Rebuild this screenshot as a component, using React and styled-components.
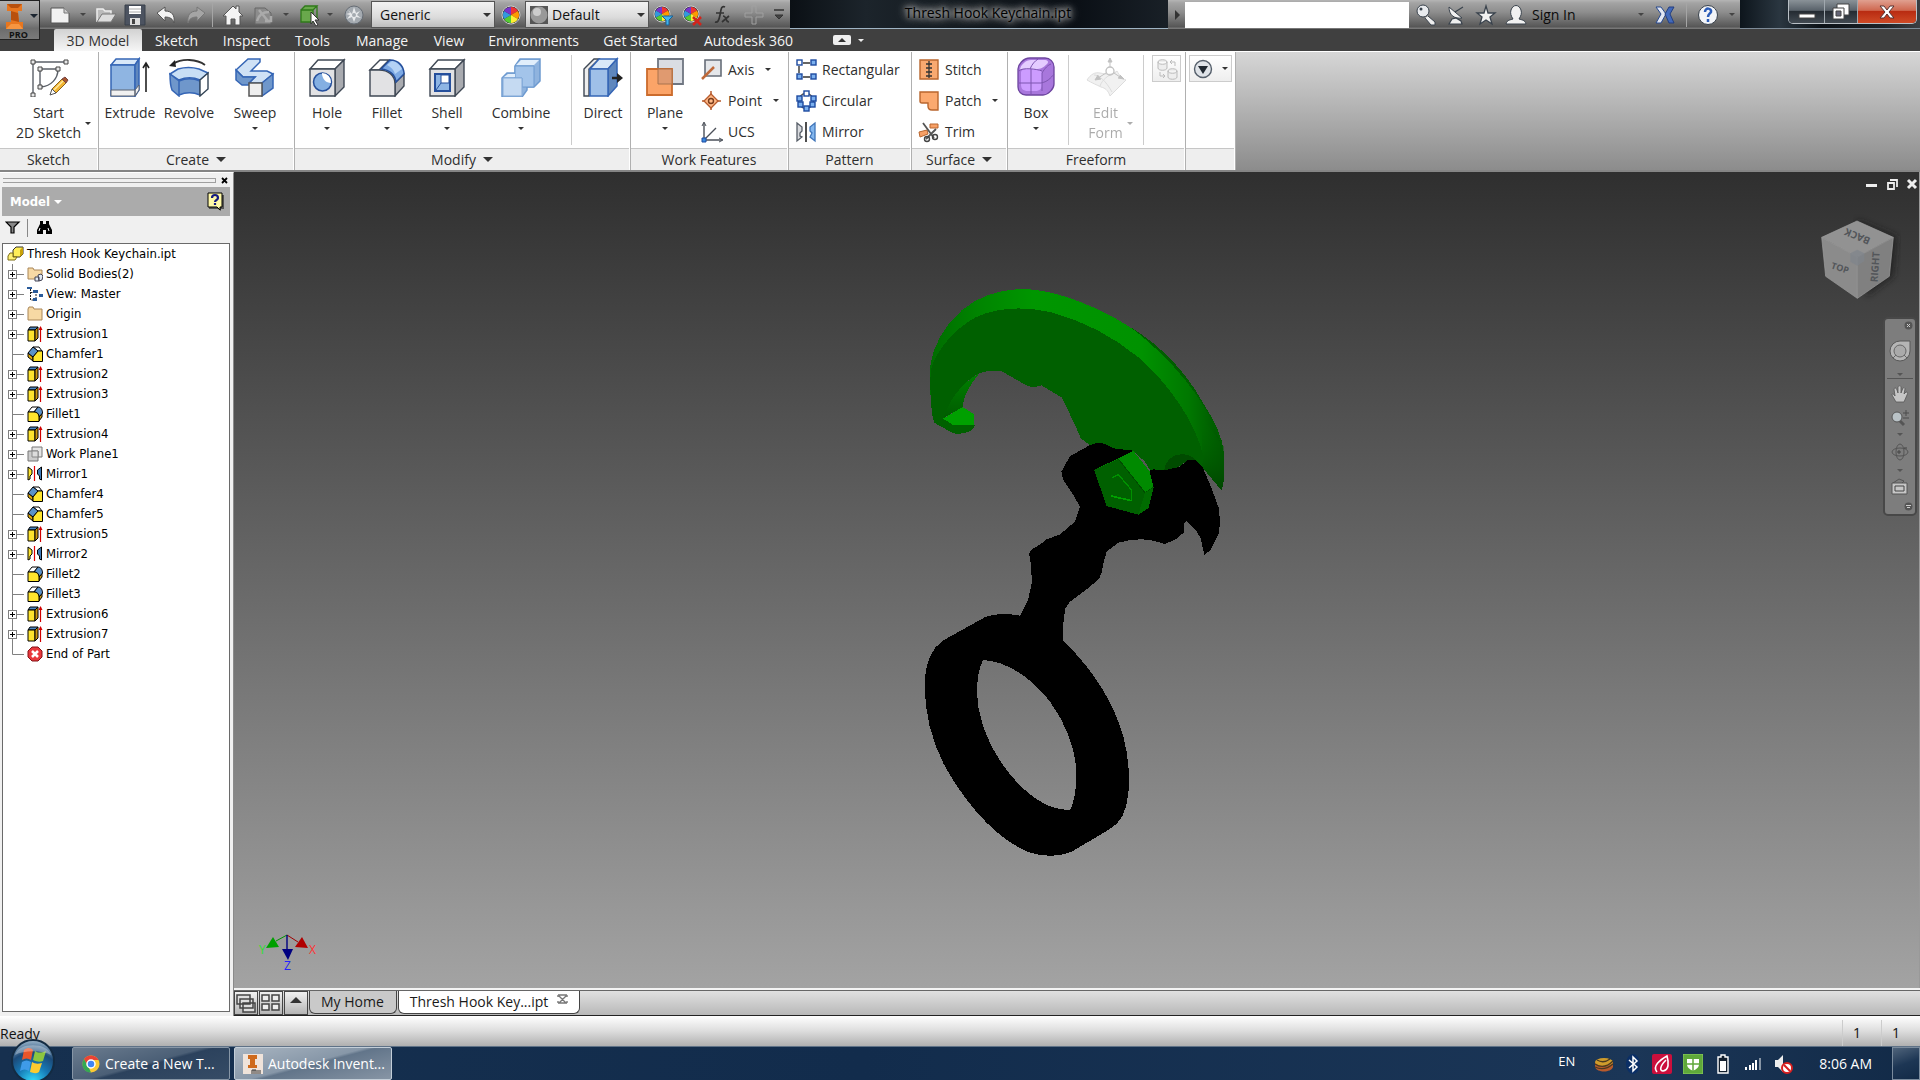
import React from 'react'
import styled, { createGlobalStyle } from 'styled-components'

const GlobalStyle = createGlobalStyle`
  * {
    box-sizing: border-box;
  }
  body {
    margin: 0;
    font-family: 'Open Sans', 'Noto Sans', sans-serif;
    font-size: 14px;
    color: #2e2e2e;
    overflow: hidden;
  }
  button, input, select {
    font: inherit;
    color: inherit;
    border: 0;
    padding: 0;
    margin: 0;
    background: none;
  }
  svg {
    display: block;
    flex: none;
  }
  ul {
    list-style: none;
    margin: 0;
    padding: 0;
  }
`

const Page = styled.div`
  display: flex;
  flex-direction: column;
  height: 100vh;
  min-height: 700px;
  background: #f0f0f0;
`

const Svg = ({ w = 20, h = w, box = `0 0 ${w} ${h}`, children, ...rest }) => (
  <svg width={w} height={h} viewBox={box} fill="none" aria-hidden="true" {...rest}>{children}</svg>
)

const Caret = styled.span`
  flex: none;
  width: 0;
  height: 0;
  border: ${pr => pr.$size || 4}px solid transparent;
  border-top-color: ${pr => pr.$color || '#333'};
  border-bottom-width: 0;
`

/* ---------- title bar ---------- */

const TopArea = styled.header`
  position: relative;
  flex: none;
  background: #404040;
`

const AppButton = styled.button`
  position: absolute;
  z-index: 2;
  left: 0;
  top: 0;
  display: grid;
  grid-template-columns: 30px 8px;
  align-items: center;
  width: 40px;
  height: 40px;
  border: 1px solid #222;
  border-left: 0;
  background: linear-gradient(#b4b4b4, #8c8c8c 50%, #6c6c6c 72%, #7a7a7a);
`

const AppEdition = styled.span`
  grid-column: 1 / 3;
  width: 37px;
  text-align: center;
  font-size: 9px;
  line-height: 10px;
  font-weight: 700;
  color: #111;
`

const TitleBar = styled.div`
  display: flex;
  height: 29px;
  background: #0c1218;
`

const BarStrip = styled.div`
  display: flex;
  flex: none;
  align-items: center;
  width: ${pr => pr.$width}px;
  padding-left: ${pr => pr.$indent || 0}px;
  background: linear-gradient(#b5b5b5 0, #a3a3a3 3px, #8e8e8e 12px, #565656 27px, #777 28px);
`

const Tool = styled.button`
  display: flex;
  flex: none;
  align-items: center;
  justify-content: center;
  width: ${pr => pr.$width}px;
  height: 26px;
`

const BarRule = styled.span`
  flex: none;
  width: 1px;
  height: 24px;
  background: #a5a5a5;
`

const ComboBox = styled.label`
  display: flex;
  flex: none;
  align-items: center;
  width: 124px;
  height: 27px;
  margin-right: ${pr => pr.$after}px;
  padding-left: ${pr => (pr.$icon ? 4 : 8)}px;
  border: 1px solid #555;
  background: linear-gradient(#f2f2f2, #dcdcdc 60%, #bdbdbd);
  color: #111;
  padding-right: 3px;
`

const Select = styled.select`
  flex: 1;
  min-width: 0;
  appearance: none;
  padding-left: ${pr => pr.$indent}px;
  outline: 0;
`

const DocTitle = styled.h1`
  flex: 1;
  margin: 0;
  border-bottom: 1px solid #9fb4c4;
  background: linear-gradient(90deg, #0b1015, #1c242b 20%, #12181d 50%, #0a0f15 75%, #192027);
  font-size: 14px;
  line-height: 25px;
  font-weight: 400;
  text-align: center;
  color: #000;
  text-shadow: 0 0 4px #bbb, 0 0 8px #bbb, 0 0 10px #aaa, 0 0 14px #888;
  padding-left: 18px;
`

const SearchInput = styled.input`
  width: 226px;
  height: 26px;
  margin-right: 3px;
  background: #fff;
`

const SignIn = styled.button`
  display: flex;
  align-items: center;
  justify-content: space-between;
  width: 113px;
  height: 26px;
  margin-right: 6px;
  color: #0a0a0a;
`

const WindowArea = styled.div`
  display: flex;
  justify-content: flex-end;
  width: 180px;
  padding-right: 3px;
  border-bottom: 1px solid #7d8b98;
  background: linear-gradient(90deg, #0d151c, #2a3640 22%, #0b1117 45%, #1b2228 80%, #3c3f43);
`

const WindowButtons = styled.div`
  display: flex;
  height: 24px;
  border: 1px solid #b9c0c6;
  border-top: 0;
  border-radius: 0 0 5px 5px;
  overflow: hidden;
`

const WindowButton = styled.button`
  display: flex;
  align-items: center;
  justify-content: center;
  width: ${pr => pr.$width}px;
  border-right: 1px solid #a0a8ae;
  background: ${pr => pr.$close
    ? 'linear-gradient(#e0a090, #cf6850 45%, #b92c12 50%, #cf4a26)'
    : 'linear-gradient(#8a9298, #59626a 45%, #252c33 50%, #424a52)'};

  &:last-child {
    border-right: 0;
  }
`

/* ---------- ribbon ---------- */

const TabRow = styled.nav`
  display: flex;
  height: 22px;
  padding-left: 54px;
`

const Tab = styled.button`
  width: ${pr => pr.$width}px;
  height: 22px;
  line-height: 20px;
  padding-top: 1px;
  text-align: center;
  white-space: nowrap;
  color: ${pr => (pr.$active ? '#333' : '#f4f4f4')};
  background: ${pr => (pr.$active ? 'linear-gradient(#d2d2d2, #f6f6f6)' : 'none')};
  border-radius: 2px 2px 0 0;
`

const TabToggle = styled.button`
  display: flex;
  align-items: center;
  gap: 7px;
  padding-left: 27px;
`

const RibbonBar = styled.section`
  display: flex;
  flex: none;
  height: 121px;
  border-top: 1px solid #fff;
  border-bottom: 2px solid #858585;
  background: linear-gradient(#d6d6d6, #8c8c8c);
`

const PanelBox = styled.div`
  display: flex;
  flex-direction: column;
  flex: none;
  width: ${pr => pr.$width}px;
  border-right: 1px solid #b0b0b0;
  background: #fff;
`

const PanelBody = styled.div`
  display: flex;
  flex: 1;
`

const PanelTitle = styled.div`
  display: flex;
  align-items: center;
  justify-content: center;
  gap: 7px;
  height: 22px;
  margin-right: 1px;
  border-top: 1px solid #c6c6c6;
  background: #eee;
`

const BigButtonBox = styled.button`
  display: flex;
  flex-direction: column;
  align-items: center;
  flex: none;
  width: ${pr => pr.$width}px;
  padding-top: 5px;
  line-height: 20px;
  opacity: ${pr => (pr.disabled ? 0.4 : 1)};
`

const BigLabel = styled.span`
  display: flex;
  align-items: center;
  justify-content: center;
  margin-top: 6px;
  margin-bottom: 4px;
  white-space: pre;
`

const WithCaret = styled.span`
  display: flex;
  align-items: center;
  gap: 4px;
  padding-left: 9px;
`

const Column = styled.div`
  display: flex;
  flex-direction: column;
  padding: 2px 0 0 ${pr => pr.$indent}px;
`

const SmallButton = styled.button`
  display: flex;
  align-items: center;
  gap: 5px;
  height: 31px;
`

const SmallCaret = styled(Caret)`
  margin-left: 6px;
`

const PanelRule = styled.span`
  width: 1px;
  height: 90px;
  margin: 3px ${pr => pr.$after || 0}px 0 ${pr => pr.$before || 0}px;
  background: #ccc;
`

const BoxedButton = styled.button`
  display: flex;
  align-items: center;
  justify-content: center;
  gap: 9px;
  width: ${pr => pr.$width}px;
  height: 27px;
  margin: 3px 0 0 ${pr => pr.$before}px;
  border: 1px solid #ccc;
  background: linear-gradient(#fff, #eee);
`

const BLUE = '#3565b5'
const DARK = '#3f4854'

const bigIcons = {
  sketch: (
    <>
      <path d="M4 5h33M4 5v33M11 12h18M11 12v18M29 12c0 10-7 17-17 18" stroke="#5b6068" strokeWidth="1.4" />
      <path d="M2 3h4v4H2zM35 3h4v4h-4zM2 36h4v4H2zM9 10h4v4H9zM27 10h4v4h-4zM9 28h4v4H9z" fill="#e8e8e8" stroke="#444" />
      <path d="M23 32l10-10 4 4-10 10z" fill="#f2b531" stroke="#8a6420" />
      <path d="M25 33l9-9" stroke="#ffe9a0" strokeWidth="1.5" />
      <path d="M33 22l3-2 3 3-2 3z" fill="#a8562c" stroke="#744" />
      <path d="M21 38l2-6 4 4z" fill="#fff" stroke="#555" />
    </>
  ),
  extrude: (
    <>
      <path d="M1 8l5-6h23l-4 6z" fill="#d8e8f8" stroke={BLUE} strokeWidth="1.5" />
      <path d="M1 8h24v31H1z" fill="#8fb5e2" stroke={BLUE} strokeWidth="1.5" />
      <path d="M25 8l4-6v31l-4 6z" fill="#5f87bd" stroke={BLUE} strokeWidth="1.5" />
      <path d="M1 33h24v6H1zM25 33l4-5v5l-4 6z" fill="#f1f1f1" stroke="#5a6270" />
      <path d="M36 7v28M33 11l3-5 3 5" stroke="#222" strokeWidth="1.6" />
    </>
  ),
  revolve: (
    <>
      <path d="M4 7c9-6 24-5 32 1" stroke="#333" strokeWidth="1.8" />
      <path d="M0 9l6-6 1 7z" fill="#222" />
      <path d="M1 17l8-5c7-2 14-2 21 0l9 4-8 7c-7-3-14-3-21 0z" fill="#c9dff5" stroke={BLUE} strokeWidth="1.5" />
      <path d="M1 17l9 7v15l-7-6c-2-5-2-11-2-16zM10 24c7-3 14-3 21 0v14c-7-3-14-3-21 0z" fill="#6f97cb" stroke={BLUE} strokeWidth="1.5" />
      <path d="M31 23l8-7v16l-8 7z" fill="#fff" stroke="#345" strokeWidth="1.4" />
    </>
  ),
  sweep: (
    <>
      <path d="M1 13L13 2h12v3l-9 9h16l6 3-11 9H14l6-6H8z" fill="#cfe1f5" stroke={BLUE} strokeWidth="1.5" />
      <path d="M1 13l7 7h12l-6 6v2H7l-6-5zM38 17v14L27 39V26z" fill="#6f97cb" stroke={BLUE} strokeWidth="1.5" />
      <path d="M14 26h13v13H14z" fill="#eee" stroke="#555" strokeWidth="1.5" />
    </>
  ),
  hole: (
    <>
      <path d="M3 12L11 3h26l-9 9z" fill="#fff" stroke={DARK} strokeWidth="1.4" />
      <path d="M28 12l9-9v27l-9 9z" fill="#a9abb0" stroke={DARK} strokeWidth="1.4" />
      <path d="M3 12h25v27H3z" fill="#e2e2e4" stroke={DARK} strokeWidth="1.4" />
      <circle cx="15.5" cy="25" r="9" fill="#84afe2" stroke="#254f9c" strokeWidth="1.5" />
      <path d="M15 16a9 9 0 0 1 9 10c-5 0-9-4-9-10z" fill="#fff" />
    </>
  ),
  fillet: (
    <>
      <path d="M3 13L13 3h9L12 13z" fill="#fff" stroke={DARK} strokeWidth="1.4" />
      <path d="M28 26l9-9v12l-9 10z" fill="#a9abb0" stroke={DARK} strokeWidth="1.4" />
      <path d="M3 13h9c9 0 16 5 16 14v12H3z" fill="#e2e2e4" stroke={DARK} strokeWidth="1.4" />
      <path d="M14 12l9-9c9 0 14 7 14 14l-8 8c-1-7-6-12-15-13z" fill="#7eaae4" stroke="#254f9c" strokeWidth="1.5" />
      <path d="M20 8l5-4c5 1 8 4 10 8l-7 5c-1-4-4-7-8-9z" fill="#b4d2f5" />
    </>
  ),
  shell: (
    <>
      <path d="M3 12L11 3h26l-9 9z" fill="#fff" stroke={DARK} strokeWidth="1.4" />
      <path d="M28 12l9-9v27l-9 9z" fill="#a9abb0" stroke={DARK} strokeWidth="1.4" />
      <path d="M3 12h25v27H3z" fill="#e2e2e4" stroke={DARK} strokeWidth="1.4" />
      <path d="M8 17h15v17H8z" fill="#8eb5e4" stroke="#254f9c" strokeWidth="2" />
      <path d="M14 18h8v8h-8z" fill="#fff" stroke="#254f9c" />
      <path d="M9 33l5-7" stroke="#254f9c" />
    </>
  ),
  combine: (
    <>
      <path d="M14 9l5-7h20v22l-6 6h-7v3l-5 7H1V21l5-5h8z" fill="#8fb3de" stroke="#6d9ad0" strokeWidth="1.5" />
      <path d="M14 9h19v21H21v-9h-7z" fill="#a3c4ea" stroke="#6d9ad0" />
      <path d="M2 21h19v18H2z" fill="#c5daf2" stroke="#85abd9" />
      <path d="M15 8l5-5h18l-5 5zM3 20l4-3h7v3z" fill="#e1eefb" />
    </>
  ),
  direct: (
    <>
      <path d="M1 12L11 2h5L6 12v27H1z" fill="#eee" stroke={DARK} strokeWidth="1.4" />
      <path d="M7 12l9-10h18l-9 10z" fill="#d8e8f8" stroke={BLUE} strokeWidth="1.5" />
      <path d="M25 12l9-10v27l-9 10z" fill="#5f87bd" stroke={BLUE} strokeWidth="1.5" />
      <path d="M7 12h18v27H7z" fill="#9fc0e8" stroke={BLUE} strokeWidth="1.5" />
      <path d="M29 21h6" stroke="#222" strokeWidth="2.5" />
      <path d="M34 16l6 5-6 5z" fill="#222" />
    </>
  ),
  plane: (
    <>
      <path d="M13 2h25v25H13z" fill="#dadde3" stroke="#6f7681" strokeWidth="1.8" />
      <path d="M2 12h25v26H2z" fill="#fba468" stroke="#cb6b2c" strokeWidth="1.8" />
      <path d="M13 12h14v15H13z" fill="#e09a70" stroke="#a9734d" />
    </>
  ),
  box: (
    <>
      <path d="M2 12c0-4 5-11 12-11h15c5 0 9 4 9 9v17c0 5-6 11-11 11H10c-5 0-8-4-8-8z" fill="#a877dc" stroke="#6d459f" strokeWidth="1.3" />
      <path d="M4 13c0-5 6-10 11-10h13c4 0 5 2 3 4-4 4-6 5-11 5H9c-3 0-5 0-5 1z" fill="#e4ccff" />
      <path d="M5 15c1-3 4-3 8-3h6c5 0 7 1 7 5v9c0 6-2 8-7 8h-7c-5 0-7-2-7-7z" fill="#cc9cff" />
      <path d="M14 12c2-5 5-8 8-10M15 12v26M3 26h22c6-1 10-5 13-9M26 16c3-5 6-8 9-9M26 16v18M3 14c3-4 18-2 23 0" stroke="#7d55b0" />
    </>
  ),
  editForm: (
    <>
      <path d="M1 23c4-6 8-8 13-7 6 1 12 3 17-2 2 4 5 8 9 9L24 39c-2-6-5-8-9-9-4-2-9-4-14-7z" fill="#ddd" stroke="#aaa" />
      <path d="M8 18c5 0 12 6 18 17M30 15c-8 3-14 8-16 14" stroke="#aaa" />
      <circle cx="24" cy="14" r="4" stroke="#666" strokeWidth="1.3" />
      <path d="M24 10V3M22 5l2-4 2 4zM20 16l-8 5M12 18l-3 5 6-1M28 16l6 4M34 18l4 4-6-1" stroke="#666" fill="#666" />
    </>
  ),
}

const Square = ({ x, y, full }) => (
  <rect x={x} y={y} width="5" height="5" fill={full ? '#7bb0ee' : '#fff'} stroke="#1d4aa0" strokeWidth="1.4" />
)

const smallIcons = {
  axis: (
    <>
      <path d="M4 1h16v16H4z" fill="#e5e7ea" stroke="#666d78" strokeWidth="1.6" />
      <path d="M1 20L13 8" stroke="#c06a3a" strokeWidth="2.5" />
    </>
  ),
  point: (
    <>
      <path d="M10 1v19M1 11h19" stroke="#b75b2d" strokeWidth="1.5" />
      <path d="M10 4l7 7-7 7-7-7z" fill="#ffb987" stroke="#b75b2d" strokeWidth="1.3" />
      <circle cx="10" cy="11" r="2.5" stroke="#7a3c1c" strokeWidth="1.4" />
    </>
  ),
  ucs: (
    <>
      <path d="M3 2v17h18M3 19L15 7" stroke="#4b5059" strokeWidth="1.4" />
      <path d="M1 5l2-4 2 4M18 17l4 2-4 2" stroke="#4b5059" />
      <path d="M1 17h4v4H1z" fill="#3b8be0" stroke="#1d4aa0" />
    </>
  ),
  rectangular: (
    <>
      <path d="M8 4h7M8 18h7M4 7v7" stroke="#333" strokeWidth="1.4" />
      <Square x="2" y="1" /><Square x="16" y="1" full /><Square x="2" y="15" full /><Square x="16" y="15" full />
    </>
  ),
  circular: (
    <>
      <circle cx="11" cy="11" r="7.500" stroke="#555" strokeWidth="1.3" />
      <Square x="9" y="1" /><Square x="2" y="6" full /><Square x="16" y="6" full />
      <Square x="3" y="12" full /><Square x="15" y="12" full /><Square x="9" y="16" full />
    </>
  ),
  mirror: (
    <>
      <path d="M11 1v20" stroke="#222" strokeWidth="1.6" />
      <path d="M2 2l5 4v4l-2 2v3l2 1-5 4z" fill="#d8dade" stroke="#555c66" strokeWidth="1.3" />
      <path d="M20 2l-5 4v4l2 2-2 4 5 4z" fill="#84b7ee" stroke="#3f74b8" strokeWidth="1.3" />
    </>
  ),
  stitch: (
    <>
      <path d="M2 1h18v19H2z" fill="#f9a970" stroke="#b9662e" strokeWidth="1.4" />
      <path d="M11 2v17M8 5h6M8 9h6M8 13h6M8 17h6" stroke="#333" strokeWidth="1.3" />
    </>
  ),
  patch: <path d="M2 2h18v18h-6c-3 0-4-2-4-4v-3H4c-1 0-2-1-2-2z" fill="#fba96f" stroke="#b9662e" strokeWidth="1.4" />,
  trim: (
    <>
      <path d="M1 11l8-2 1 4-8 3zM12 3h8v4h-8z" fill="#f7a066" stroke="#b9662e" />
      <path d="M5 2l11 15M18 8L8 18" stroke="#555" strokeWidth="1.8" />
      <circle cx="9" cy="18" r="2.5" stroke="#444" strokeWidth="1.4" />
      <circle cx="17" cy="16" r="2.5" stroke="#444" strokeWidth="1.4" />
    </>
  ),
}

const tabs = [
  ['3D Model', 88], ['Sketch', 69], ['Inspect', 71], ['Tools', 61], ['Manage', 78],
  ['View', 56], ['Environments', 113], ['Get Started', 101], ['Autodesk 360', 115],
]

const Panel = ({ title, width, menu, children }) => (
  <PanelBox $width={width}>
    <PanelBody>{children}</PanelBody>
    <PanelTitle>{title}{menu && <Caret $size={5} />}</PanelTitle>
  </PanelBox>
)

const Big = ({ icon, label, width, menu, side, disabled }) => (
  <BigButtonBox $width={width} disabled={disabled}>
    <Svg w={40}>{bigIcons[icon]}</Svg>
    {side
      ? <BigLabel as={WithCaret}><span>{label}</span><Caret $size={3} /></BigLabel>
      : <BigLabel>{label}</BigLabel>}
    {menu && <Caret $size={3} />}
  </BigButtonBox>
)

const Small = ({ icon, label, menu }) => (
  <SmallButton>
    <Svg w={22}>{smallIcons[icon]}</Svg>
    {label}
    {menu && <SmallCaret $size={3} />}
  </SmallButton>
)

function Ribbon() {
  return (
    <RibbonBar>
      <Panel title="Sketch" width={99}>
        <Big icon="sketch" label={'Start\n2D Sketch'} width={98} side />
      </Panel>
      <Panel title="Create" width={196} menu>
        <Big icon="extrude" label="Extrude" width={62} />
        <Big icon="revolve" label="Revolve" width={56} />
        <Big icon="sweep" label="Sweep" width={76} menu />
      </Panel>
      <Panel title="Modify" width={336} menu>
        <Big icon="hole" label="Hole" width={64} menu />
        <Big icon="fillet" label="Fillet" width={56} menu />
        <Big icon="shell" label="Shell" width={64} menu />
        <Big icon="combine" label="Combine" width={84} menu />
        <PanelRule $before={8} $after={5} />
        <Big icon="direct" label="Direct" width={52} />
      </Panel>
      <Panel title="Work Features" width={158}>
        <Big icon="plane" label="Plane" width={68} menu />
        <Column $indent={2}>
          <Small icon="axis" label="Axis" menu />
          <Small icon="point" label="Point" menu />
          <Small icon="ucs" label="UCS" />
        </Column>
      </Panel>
      <Panel title="Pattern" width={123}>
        <Column $indent={6}>
          <Small icon="rectangular" label="Rectangular" />
          <Small icon="circular" label="Circular" />
          <Small icon="mirror" label="Mirror" />
        </Column>
      </Panel>
      <Panel title="Surface" width={96} menu>
        <Column $indent={6}>
          <Small icon="stitch" label="Stitch" />
          <Small icon="patch" label="Patch" menu />
          <Small icon="trim" label="Trim" />
        </Column>
      </Panel>
      <Panel title="Freeform" width={178}>
        <Big icon="box" label="Box" width={56} menu />
        <PanelRule $before={4} />
        <Big icon="editForm" label={'Edit\nForm'} width={74} side disabled />
        <PanelRule />
        <BoxedButton $width={29} $before={8} disabled>
          <Svg w={22}>
            <g stroke="#bbb" fill="#eee">
              <path d="M2 4v6c0 3 9 3 9 0V4M2 4c0-3 9-3 9 0s-9 3-9 0zM12 13v6c0 3 9 3 9 0v-6M12 13c0-3 9-3 9 0s-9 3-9 0z" />
              <path d="M14 4h5v4M16 2l-2 2 2 2M4 14v4h5M7 16l2 2-2 2" fill="none" />
            </g>
          </Svg>
        </BoxedButton>
      </Panel>
      <Panel title="" width={50}>
        <BoxedButton $width={43} $before={3}>
          <Svg w={20}>
            <circle cx="10" cy="10" r="8.5" fill="#dfe3e8" stroke="#555f6b" strokeWidth="1.4" />
            <path d="M5 7h10l-5 8z" fill="#1f2730" />
          </Svg>
          <Caret $size={3} />
        </BoxedButton>
      </Panel>
    </RibbonBar>
  )
}

const wheelColors = ['#e33', '#f90', '#fe3', '#5c3', '#39d', '#73c']

const ColorWheel = ({ r = 9 }) => (
  <g transform="translate(10 10)">
    <circle r={r} fill="#333" stroke="#ccc" />
    {wheelColors.map((c, i) => (
      <path key={c} d={`M0 0L0 ${-r + 1}A${r - 1} ${r - 1} 0 0 1 ${(r - 1) * 0.866} ${(1 - r) / 2}Z`} fill={c} transform={`rotate(${i * 60})`} />
    ))}
  </g>
)

function QuickAccess() {
  return (
    <BarStrip $width={790} $indent={46}>
      <Tool $width={28} aria-label="New"><Svg w={22}><path d="M2 4h13l5 5v10H2z" fill="#f1f1f1" stroke="#555" /><path d="M15 4v5h5" fill="#ccc" stroke="#777" /></Svg></Tool>
      <Tool $width={18} aria-label="New options"><Caret $color="#444" $size={3} /></Tool>
      <Tool $width={27} aria-label="Open"><Svg w={22}><path d="M2 18V5h6l2 2h6v3" fill="#bbb" stroke="#eee" strokeWidth="1.5" /><path d="M2 18l5-8h14l-5 8z" fill="#ddd" stroke="#777" /></Svg></Tool>
      <Tool $width={32} aria-label="Save"><Svg w={22}><path d="M1 1h20v20H1z" fill="#4c5360" stroke="#39404a" /><path d="M5 2h12v8H5z" fill="#fff" /><path d="M5 5h12M5 8h12" stroke="#aaa" /><path d="M6 14h10v7H6z" fill="#ddd" /><path d="M8 15h3v5H8z" fill="#444" /></Svg></Tool>
      <Tool $width={29} aria-label="Undo"><Svg w={22}><path d="M2 9l8-6v4c7 0 10 4 9 12-1-4-4-6-9-6v4z" fill="#f3f3f3" stroke="#555" /></Svg></Tool>
      <Tool $width={32} aria-label="Redo"><Svg w={22}><path d="M20 9l-8-6v4c-7 0-10 4-9 12 1-4 4-6 9-6v4z" fill="#a5a5a5" stroke="#777" /></Svg></Tool>
      <BarRule />
      <Tool $width={40} aria-label="Home"><Svg w={22}><path d="M1 12L11 2l3 3V2h3v6l4 4h-3v9h-5v-6H9v6H4v-9z" fill="#f4f4f4" stroke="#555" /></Svg></Tool>
      <Tool $width={22} aria-label="Switch"><Svg w={22}><path d="M2 4h10l6 5v11H2z" fill="#8c8c8c" stroke="#666" /><path d="M4 17c2-7 7-9 12-9M6 6l9 11M12 17h6v-5" stroke="#aaa" strokeWidth="2.5" /></Svg></Tool>
      <Tool $width={22} aria-label="Switch options"><Caret $color="#444" $size={3} /></Tool>
      <Tool $width={26} aria-label="Select"><Svg w={22}><path d="M2 6h12v12H2zM2 6l4-4h12l-4 4M18 2v12" fill="#69a84c" stroke="#2f7a1a" strokeWidth="1.3" /><path d="M12 8l8 8h-4l3 5-2 1-3-5-2 3z" fill="#fff" stroke="#333" /></Svg></Tool>
      <Tool $width={14} aria-label="Select options"><Caret $color="#444" $size={3} /></Tool>
      <Tool $width={34} aria-label="Render">
        <Svg w={20}>
          <circle cx="10" cy="10" r="9" fill="#a4aab0" stroke="#666d75" />
          <path d="M4 5l4 4 2-7 2 6 4-2-3 4 4 3-5-1-2 5-2-5-5 2 3-4-4-1 4-1z" fill="#e8eaec" />
          <circle cx="10" cy="10" r="2" fill="#a4aab0" />
        </Svg>
      </Tool>
      <ComboBox $after={2}>
        <Select $indent={0} aria-label="Material"><option>Generic</option></Select>
        <Caret />
      </ComboBox>
      <Tool $width={28} aria-label="Appearance"><Svg w={20}><ColorWheel /></Svg></Tool>
      <ComboBox $after={0} $icon>
        <Svg w={18}>
          <rect width="18" height="18" fill="#555" />
          <circle cx="9" cy="9" r="8.5" fill="#999" />
          <circle cx="7" cy="6" r="4" fill="#ccc" />
        </Svg>
        <Select $indent={4} aria-label="Appearance style"><option>Default</option></Select>
        <Caret />
      </ComboBox>
      <Tool $width={28} aria-label="Adjust"><Svg w={22}><ColorWheel r={8} /><path d="M10 12h11l-4 4v5h-3v-5z" fill="#41b4ee" stroke="#1b5f92" /></Svg></Tool>
      <Tool $width={30} aria-label="Clear"><Svg w={22}><ColorWheel r={8} /><path d="M12 13l8 8M20 13l-8 8" stroke="#d3241b" strokeWidth="2.5" /></Svg></Tool>
      <Tool $width={32} aria-label="Parameters"><Svg w={20}><path d="M12 2c-4-2-4 3-5 8s-2 8-5 7M3 8h8M10 11c4 0 2 6 6 6M16 11l-7 6" stroke="#333" strokeWidth="1.7" /></Svg></Tool>
      <Tool $width={30} aria-label="Measure"><Svg w={20}><path d="M8 1h4v7h7v4h-7v7H8v-7H1V8h7z" stroke="#a0a0a0" /></Svg></Tool>
      <Tool $width={20} aria-label="Customize"><Svg w={12}><path d="M1 1h10" stroke="#333" strokeWidth="1.5" /><path d="M2 6h8l-4 4z" fill="#444" stroke="#333" /></Svg></Tool>
    </BarStrip>
  )
}

function Header() {
  return (
    <TopArea>
      <AppButton aria-label="Application menu">
        <Svg w={30} h={29}>
          <path d="M7 3h15v7h-4l1 11h4v7H6v-7h5V10H7z" fill="#e7761f" />
          <path d="M7 3h15l-4 4h-7zM11 10l7 2 1 9-8-2z" fill="#b8500d" />
          <path d="M6 28l5-5h8l4 5z" fill="#f59541" />
        </Svg>
        <Caret $color="#1c2530" />
        <AppEdition>PRO</AppEdition>
      </AppButton>
      <TitleBar>
        <QuickAccess />
        <DocTitle>Thresh Hook Keychain.ipt</DocTitle>
        <BarStrip $width={572} $indent={3}>
          <Tool $width={14} aria-label="Collapse search"><Svg w={8} h={10}><path d="M1 0l5 5-5 5z" fill="#333" /></Svg></Tool>
          <SearchInput aria-label="Search" />
          <Tool $width={28} aria-label="Key"><Svg w={22}><path d="M13 12l7 6v3h-4l-6-7" fill="#eee" stroke="#3a434d" /><circle cx="8" cy="7" r="6" fill="#e9ebee" stroke="#3a434d" /><circle cx="6" cy="5" r="1.5" fill="#3a434d" /></Svg></Tool>
          <Tool $width={32} aria-label="Communication center"><Svg w={22}><path d="M4 3c0 8 5 12 13 11z" fill="#f1f1f1" stroke="#3a434d" /><path d="M10 8l8-5M4 20l3-5 4-1 5 3 1 3z" fill="#eee" stroke="#3a434d" strokeWidth="1.2" /></Svg></Tool>
          <Tool $width={28} aria-label="Favorites"><Svg w={22}><path d="M11 2l2 7h7l-5 4 2 7-6-4-6 4 2-7-5-4h7z" fill="#f1f1f1" stroke="#3a434d" strokeWidth="1.3" /></Svg></Tool>
          <Tool $width={32} aria-label="Account"><Svg w={22}><path d="M1 20c1-4 4-4 7-5-2-3-3-6-2-9 2-6 8-6 10 0 1 3 0 6-2 9 3 1 6 1 7 5z" fill="#f1f1f1" stroke="#3a434d" /></Svg></Tool>
          <SignIn>Sign In <Caret $color="#444" $size={3} /></SignIn>
          <Tool $width={30} aria-label="Exchange"><Svg w={20}><path d="M1 2h5l5 7-5 9H1l5-9z" fill="#e1e6f2" stroke="#26488f" /><path d="M19 2h-5l-4 7 4 9h5l-4-9z" fill="#4269ba" stroke="#243f80" /></Svg></Tool>
          <Tool $width={12} aria-label="More"><BarRule /></Tool>
          <Tool $width={32} aria-label="Help">
            <Svg w={22}>
              <circle cx="11" cy="11" r="9.5" fill="#f2f4f8" stroke="#3a434d" />
              <path d="M8 8c0-5 7-4 6 0-1 2-3 2-3 5M11 15v3" stroke="#2b5cb8" strokeWidth="2.5" />
            </Svg>
          </Tool>
          <Tool $width={16} aria-label="Help options"><Caret $color="#444" $size={3} /></Tool>
        </BarStrip>
        <WindowArea>
          <WindowButtons>
            <WindowButton $width={36} aria-label="Minimize"><Svg w={18}><path d="M1 11h16v4H1z" fill="#fff" stroke="#444" /></Svg></WindowButton>
            <WindowButton $width={33} aria-label="Restore"><Svg w={18}><path d="M5 1h12v11H5z" fill="#fff" stroke="#444" /><path d="M1 5h11v11H1z" fill="#fff" stroke="#444" /><path d="M4 8h5v5H4z" fill="#667" stroke="#444" /></Svg></WindowButton>
            <WindowButton $width={58} $close aria-label="Close"><Svg w={18} h={16}><path d="M2 2h4l3 4 3-4h4l-5 6 5 6h-4l-3-4-3 4H2l5-6z" fill="#fff" stroke="#533" /></Svg></WindowButton>
          </WindowButtons>
        </WindowArea>
      </TitleBar>
      <TabRow>
        {tabs.map(([name, width]) => (
          <Tab key={name} $width={width} $active={name === '3D Model'}>{name}</Tab>
        ))}
        <TabToggle aria-label="Minimize ribbon">
          <Svg w={18} h={10}><rect width="18" height="10" rx="2" fill="#eee" /><path d="M5 7l4-4 4 4z" fill="#333" /></Svg>
          <Caret $size={3} $color="#eee" />
        </TabToggle>
      </TabRow>
    </TopArea>
  )
}

/* ---------- model browser ---------- */

const Workspace = styled.main`
  display: flex;
  flex: 1;
  min-height: 0;
`

const Browser = styled.aside`
  display: flex;
  flex-direction: column;
  flex: none;
  width: 234px;
  padding: 1px 3px 4px 2px;
  border-top: 1px solid #fff;
  border-right: 1px solid #8a8a8a;
  font-family: 'DejaVu Sans Condensed', 'DejaVu Sans', sans-serif;
  font-size: 13px;
  color: #000;
`

const Grip = styled.div`
  display: flex;
  align-items: center;
  gap: 5px;
  height: 13px;
  padding: 0 2px 0 1px;
`

const GripBar = styled.span`
  flex: 1;
  height: 5px;
  border: 1px solid #a0a0a0;
  border-left: 0;
`

const BrowserHead = styled.div`
  display: flex;
  align-items: center;
  gap: 4px;
  height: 29px;
  padding: 0 4px 0 8px;
  background: #ababab;
  color: #fff;
  font-weight: 700;
`

const HelpButton = styled.button`
  margin-left: auto;
`

const BrowserTools = styled.div`
  display: flex;
  align-items: center;
  height: 27px;
  padding: 0 0 3px 3px;
  gap: 6px;
`

const ToolRule = styled.span`
  width: 1px;
  height: 18px;
  background: #888;
`

const TreeBox = styled.div`
  flex: 1;
  min-height: 0;
  border: 1px solid #6a6a6a;
  background: #fff;
`

const TreeRow = styled.li`
  display: flex;
  align-items: center;
  height: 20px;
  gap: 3px;
  padding-left: ${pr => (pr.$root ? 4 : 3)}px;
  line-height: 20px;
  white-space: nowrap;
`

const nodes = [
  ['Solid Bodies(2)', 'bodies', true], ['View: Master', 'view', true], ['Origin', 'folder', true],
  ['Extrusion1', 'extrusion', true], ['Chamfer1', 'chamfer'], ['Extrusion2', 'extrusion', true],
  ['Extrusion3', 'extrusion', true], ['Fillet1', 'fillet'], ['Extrusion4', 'extrusion', true],
  ['Work Plane1', 'workplane', true], ['Mirror1', 'mirror', true], ['Chamfer4', 'chamfer'],
  ['Chamfer5', 'chamfer'], ['Extrusion5', 'extrusion', true], ['Mirror2', 'mirror', true],
  ['Fillet2', 'fillet'], ['Fillet3', 'fillet'], ['Extrusion6', 'extrusion', true],
  ['Extrusion7', 'extrusion', true], ['End of Part', 'end'],
]

const treeIcons = {
  bodies: (
    <>
      <path d="M1 13V2h5l1 2h8v9z" fill="#f7d9a4" stroke="#a98658" />
      <path d="M8 11h4v4H8zM11 9l3-1 2 2-1 4-3 1z" fill="#dfe8f3" stroke="#445" />
    </>
  ),
  view: (
    <>
      <path d="M3.500 3v11h3M3.500 6.500h3M9 8v5M12 9h3" stroke="#222" strokeDasharray="2 1" />
      <path d="M0 1h5v2H0zM6 4h5v3H6zM6 12h4v3H6zM12 8h4v3h-4z" fill="#2a5b9a" />
    </>
  ),
  folder: <path d="M1 14V3l1-2h4l1 2h8v11z" fill="#f7d9a4" stroke="#a98658" />,
  extrusion: (
    <>
      <path d="M1 4l2-3h8L8 4z" fill="#4d86c0" stroke="#000" />
      <path d="M1 4h7v11H1z" fill="#ffe52e" stroke="#000" />
      <path d="M8 4l3-3v11l-3 3z" fill="#c9940a" stroke="#000" />
      <path d="M13.5 16V1" stroke="#d00000" strokeWidth="1.2" />
      <path d="M11.5 4h4l-2-4z" fill="#d00000" />
    </>
  ),
  chamfer: (
    <>
      <path d="M1 7l5 4v4l-5-4z" fill="#e0a90c" stroke="#000" />
      <path d="M6 1h6l3 4h-4z" fill="#fff" stroke="#000" />
      <path d="M1 7l5-6 5 4-5 6z" fill="#5b91c8" stroke="#000" />
      <path d="M6 11l5-6h4.500v10.500H6z" fill="#ffe52e" stroke="#000" />
    </>
  ),
  fillet: (
    <>
      <path d="M1 6l4-5h6L7 6z" fill="#fff" stroke="#000" />
      <path d="M12 11l3-4v4l-3 4z" fill="#c9940a" stroke="#000" />
      <path d="M7 6l4-5c3 0 4.500 3 4.500 6L12 11c0-3-2-5-5-5z" fill="#5b91c8" stroke="#000" />
      <path d="M1 6h6c3 0 5 2 5 5v4.500H1z" fill="#ffe52e" stroke="#000" />
    </>
  ),
  workplane: (
    <>
      <path d="M5 1h10v10H5z" fill="#e5e5e5" stroke="#777" />
      <path d="M1 5h10v10H1z" fill="#ccc" stroke="#777" />
      <path d="M5 5h6v6H5z" fill="#ddd" stroke="#888" />
    </>
  ),
  mirror: (
    <>
      <path d="M7.5 0v15" stroke="#e00000" strokeWidth="1.2" />
      <path d="M1 1l4 3v4l-2 2v3l-2 1z" fill="#ffe52e" stroke="#000" />
      <path d="M14.500 1l-4 3v4l2 2v3l2 1z" fill="#3f7bb8" stroke="#000" />
    </>
  ),
  end: (
    <>
      <path d="M5 1h6l4 4v6l-4 4H5l-4-4V5z" fill="#e8383d" stroke="#841216" />
      <path d="M5 5l6 6M11 5l-6 6" stroke="#fff" strokeWidth="2.5" />
    </>
  ),
}

const Branch = ({ plus, last }) => (
  <Svg w={18} h={20}>
    <path d={last ? 'M6.5 0v10.5' : 'M6.5 0v20'} stroke="#808080" />
    <path d="M6.5 10.5H18" stroke="#808080" />
    {plus && (
      <>
        <rect x="2.5" y="6.5" width="8" height="8" fill="#fff" stroke="#808080" />
        <path d="M4 10.5h5M6.5 8v5" stroke="#000" />
      </>
    )}
  </Svg>
)

function ModelBrowser() {
  return (
    <Browser>
      <Grip>
        <GripBar />
        <button aria-label="Close panel"><Svg w={7}><path d="M1 1l5 5M6 1L1 6" stroke="#000" strokeWidth="1.8" /></Svg></button>
      </Grip>
      <BrowserHead>
        Model <Caret $color="#fff" />
        <HelpButton aria-label="Panel help">
          <Svg w={20}>
            <path d="M3 3h15v14H15v2l-3-2H3z" fill="#555" />
            <path d="M2 1h14v14h-2v3l-3-3H2z" fill="#fff9a8" stroke="#000" />
            <path d="M6 6c0-4 6-4 6 0 0 2-3 2-3 4M9 11v2" stroke="#141a80" strokeWidth="2.2" />
          </Svg>
        </HelpButton>
      </BrowserHead>
      <BrowserTools>
        <button aria-label="Filter"><Svg w={16}><path d="M1 2h13L9 7v6H6V7z" fill="#888" stroke="#000" strokeWidth="1.2" /></Svg></button>
        <ToolRule />
        <button aria-label="Find">
          <Svg w={22} h={16}>
            <path d="M6 1h3v3h3V1h3v3l3 6v4h-6v-4h-3v4H3v-4l3-6z" fill="#000" />
            <path d="M6 8l-1 3M14 8l1 3" stroke="#fff" />
          </Svg>
        </button>
      </BrowserTools>
      <TreeBox>
        <ul>
          <TreeRow $root>
            <Svg w={17} h={16}>
              <path d="M6 4l3-3h7v7l-3 3H6z" fill="#ffee58" stroke="#333" />
              <path d="M13 4l3-3v7l-3 3z" fill="#c9a20a" />
              <path d="M1 10l2-3h3v4h4l-2 3H1z" fill="#fff176" stroke="#7a6a10" />
            </Svg>
            Thresh Hook Keychain.ipt
          </TreeRow>
          {nodes.map(([name, icon, plus], i) => (
            <TreeRow key={name}>
              <Branch plus={plus} last={i === nodes.length - 1} />
              <Svg w={16}>{treeIcons[icon]}</Svg>
              {name}
            </TreeRow>
          ))}
        </ul>
      </TreeBox>
    </Browser>
  )
}

/* ---------- viewport ---------- */

const Stage = styled.div`
  display: flex;
  flex-direction: column;
  flex: 1;
  min-width: 0;
`

const Viewport = styled.div`
  position: relative;
  display: flex;
  flex: 1;
  justify-content: center;
  padding: 98px 0 0 6px;
  min-height: 0;
  overflow: hidden;
  border-right: 1px solid #999;
  background: linear-gradient(#2f2f2f, #686868 50%, #a3a3a3);
`

const DocControls = styled.div`
  position: absolute;
  top: 6px;
  right: 1px;
  display: flex;
  gap: 8px;
`

const CubeSpot = styled.div`
  position: absolute;
  top: 41px;
  right: 15px;
`

const NavBar = styled.div`
  position: absolute;
  top: 145px;
  right: 2px;
  display: flex;
  flex-direction: column;
  align-items: center;
  width: 34px;
  height: 199px;
  border: 2px solid #484848;
  border-radius: 5px;
  background: #7d7d7d;
`

const NavButton = styled.button`
  display: flex;
  align-items: center;
  justify-content: center;
  align-self: ${pr => (pr.$end ? 'flex-end' : 'center')};
  height: ${pr => pr.$height}px;
  padding-right: ${pr => (pr.$end ? 2 : 0)}px;
`

const NavRule = styled.span`
  width: 26px;
  height: 1px;
  background: #555;
`

const TriadSpot = styled.div`
  position: absolute;
  left: 22px;
  bottom: 12px;
`

const HookModel = () => (
  <Svg w={360} h={600} box="0 0 1080 1800" shapeRendering="crispEdges">
    <defs>
      <linearGradient id="rim" x1="90" y1="0" x2="972" y2="0" gradientUnits="userSpaceOnUse">
        <stop offset="0" stopColor="#006c00" />
        <stop offset=".16" stopColor="#008400" />
        <stop offset=".35" stopColor="#009600" />
        <stop offset=".72" stopColor="#009200" />
        <stop offset=".88" stopColor="#007800" />
        <stop offset="1" stopColor="#005200" />
      </linearGradient>
      <linearGradient id="inner" x1="0" y1="310" x2="0" y2="440" gradientUnits="userSpaceOnUse">
        <stop offset="0" stopColor="#008000" />
        <stop offset="1" stopColor="#005c00" />
      </linearGradient>
      <linearGradient id="tip" x1="0" y1="440" x2="0" y2="660" gradientUnits="userSpaceOnUse">
        <stop offset="0" stopColor="#007000" stopOpacity="0" />
        <stop offset="1" stopColor="#004600" />
      </linearGradient>
    </defs>
    <path
      d="M90 290C98 230 130 170 185 121C240 75 305 57 375 57C460 60 560 98 650 147C760 208 850 310 910 400C942 450 968 500 972 550V630L965 662L905 590L700 450L500 300L300 260L200 290L110 400L92 400Z"
      fill="url(#rim)"
    />
    <path d="M690 170C790 232 860 310 910 400C942 450 966 500 970 540L955 500C915 390 825 275 690 170Z" fill="#005e00" />
    <path d="M905 440L972 530V630L965 662L905 590Z" fill="url(#tip)" />
    <path
      d="M92 300C110 240 160 180 225 143C290 112 370 108 450 126C550 152 640 200 715 262C810 345 885 455 911 560L905 595L880 571H862L835 590L795 601H750L735 575L697 542L640 535L605 520L570 525L543 506L525 465L486 383L424 346L404 351L384 349L306 304C280 300 255 303 238 310C195 330 150 385 133 438L129 446L162 466H224L221 474C210 488 185 494 160 490L102 458C92 420 90 370 92 300Z"
      fill="#006000"
    />
    <path d="M238 310C205 350 190 380 188 411L131 444C140 405 180 340 238 310Z" fill="url(#inner)" />
    <path d="M129 446L188 411L221 432V465H160Z" fill="#00a000" />
    <path d="M792 601C795 570 820 550 852 553C875 557 886 566 888 571H862L845 585C830 595 815 600 792 601Z" fill="#004b00" />
    <path
      d="M570 525C590 517 605 518 615 522L640 535L700 542L745 603L760 598L795 601L840 590L862 571L888 570L908 592L933 650L957 716L960 760L956 790L932 840L913 854L902 805L890 785L858 753L852 760V787L827 808L795 822L770 815C740 805 700 805 655 818L620 845L610 880L606 905L598 925L570 950L510 995L496 1015L490 1060V1112C590 1210 645 1310 670 1400C686 1460 690 1520 685 1570C680 1620 665 1660 625 1680L515 1745C475 1762 430 1760 390 1748C290 1710 195 1600 130 1480C90 1400 70 1310 75 1220C80 1175 95 1135 128 1112L258 1040C290 1030 325 1030 361 1037L384 990L396 935L392 880L387 850L395 838L420 824L440 808L480 793L525 755L540 710L520 675L490 630L484 605L495 585L511 558ZM249 1170C310 1172 390 1215 450 1295C515 1385 535 1475 528 1540C526 1575 520 1600 511 1619C440 1625 360 1560 305 1480C250 1400 225 1310 232 1240C234 1210 240 1190 249 1170Z"
      fill="#000"
      fillRule="evenodd"
    />
    <path d="M582 600L700 543L749 604L761 652L745 715L715 734L620 708Z" fill="#008a00" />
    <path d="M582 600L655 567L735 668L715 734L620 708Z" fill="#006000" />
    <path d="M655 567L735 668L761 652" stroke="#004c00" strokeWidth="3" />
    <path d="M735 668L761 652L745 715L715 734Z" fill="#006b00" />
    <path d="M637 622L655 614L695 660V692" stroke="#009000" strokeWidth="4" />
    <path d="M633 678L695 692" stroke="#00a000" strokeWidth="5" />
  </Svg>
)

const ViewCube = () => (
  <Svg w={87} h={90} box="110 130 261 270">
    <defs>
      <filter id="soft"><feGaussianBlur stdDeviation="10" /></filter>
    </defs>
    <path d="M230 150L350 200L340 320L260 380Z" fill="#1f1f1f" filter="url(#soft)" opacity=".7" />
    <path d="M230 154L339 203L231 262L124 203Z" fill="#929292" />
    <path d="M124 203L231 262V386L136 320Z" fill="#8b8b8b" />
    <path d="M339 203L231 262V386L327 320Z" fill="#808080" />
    <path d="M230 154L339 203L327 320L231 386L136 320L124 203ZM124 203L231 262L339 203M231 262V386" stroke="#a0a0a0" strokeWidth="2" />
    <path d="M231 240L252 251V274L231 288L210 276V251Z" fill="#7f858b" opacity=".7" />
    <g fill="#53565a" fontFamily="Open Sans, sans-serif" fontWeight="700" fontSize="30" textAnchor="middle">
      <text transform="translate(235 190) rotate(203)">BACK</text>
      <text transform="translate(176 304) rotate(18)" fontSize="27">TOP</text>
      <text transform="translate(295 293) rotate(-86)" fontSize="30">RIGHT</text>
    </g>
  </Svg>
)

function NavigationBar() {
  return (
    <NavBar>
      <NavButton $height={12} $end aria-label="Close navigation bar"><Svg w={9}><circle cx="4.5" cy="4.5" r="4" fill="#555" /><path d="M3 3l3 3M6 3L3 6" stroke="#ccc" /></Svg></NavButton>
      <NavButton $height={39} aria-label="Full navigation wheel">
        <Svg w={22}>
          <path d="M11 1h10v10A10 10 0 1 1 11 1z" fill="#b5b5b5" stroke="#595959" />
          <circle cx="11" cy="11" r="6" fill="#aaa" stroke="#666" />
          <path d="M4 18l3-3M18 18l-3-3" stroke="#666" />
        </Svg>
      </NavButton>
      <NavButton $height={8} aria-label="Wheel options"><Caret $size={3} $color="#555" /></NavButton>
      <NavRule />
      <NavButton $height={29} aria-label="Pan">
        <Svg w={18}><path d="M5 17l-4-7c0-2 2-1 3 1L3 4c1-2 2-1 3 1l1 3V2c1-2 3-1 3 0v6l2-5c1-1 2 0 2 1l-1 5 2-2c2 0 2 1 1 3l-3 7z" fill="#c6c6c6" stroke="#555" strokeWidth=".8" /></Svg>
      </NavButton>
      <NavButton $height={20} aria-label="Zoom">
        <Svg w={20}><path d="M9 12l5 5" stroke="#555" strokeWidth="3" /><circle cx="7" cy="9" r="5" fill="#b9c2c6" stroke="#555" /><path d="M13 5h6M16 2v6M13 10h6" stroke="#4d4d4d" /></Svg>
      </NavButton>
      <NavButton $height={12} aria-label="Zoom options"><Caret $size={3} $color="#555" /></NavButton>
      <NavButton $height={24} aria-label="Orbit">
        <Svg w={18}><ellipse cx="9" cy="9" rx="8" ry="4" stroke="#555" /><ellipse cx="9" cy="9" rx="4" ry="8" stroke="#555" /><path d="M6 9h4M8 7v4M13 5h3" stroke="#444" /></Svg>
      </NavButton>
      <NavButton $height={12} aria-label="Orbit options"><Caret $size={3} $color="#555" /></NavButton>
      <NavButton $height={22} aria-label="Look at">
        <Svg w={18}><path d="M2 5l6-4 5 2-2 2" stroke="#555" /><path d="M1 5h15v11H1z" fill="#c6c6c6" stroke="#555" /><path d="M4 8h9v5H4z" stroke="#444" /></Svg>
      </NavButton>
      <NavButton $height={16} $end aria-label="Customize navigation bar"><Svg w={9}><circle cx="4.5" cy="4.5" r="4" fill="#555" /><path d="M2 3.5h5M3 5.5h3" stroke="#ccc" /></Svg></NavButton>
    </NavBar>
  )
}

const Triad = () => (
  <Svg w={64} h={46} fontFamily="Open Sans, sans-serif" fontSize="12">
    <path d="M31 5L20 11" stroke="#009000" />
    <path d="M31 5l11 7" stroke="#a00000" />
    <path d="M31 5v16" stroke="#000080" strokeWidth="1.4" />
    <path d="M17 7l6 10-13 1z" fill="#00a000" />
    <path d="M46 7l-7 10 13 1z" fill="#b00000" />
    <path d="M26 19h11l-5 11z" fill="#000080" />
    <text x="3" y="24" fill="#2fe02f">Y</text>
    <text x="53" y="24" fill="#f33">X</text>
    <text x="28" y="40" fill="#22f">Z</text>
  </Svg>
)

const DocTabs = styled.div`
  display: flex;
  align-items: flex-start;
  gap: 1px;
  flex: none;
  height: 28px;
  padding-top: 1px;
  border-top: 2px solid #f4f4f4;
  border-bottom: 1px solid #222;
  background: linear-gradient(#e2e2e2, #b8b8b8);
  box-shadow: inset 0 1px #666;
`

const ArrangeButton = styled.button`
  display: flex;
  align-items: center;
  justify-content: center;
  width: 24px;
  height: 24px;
  border: 1px solid #444;
  background: linear-gradient(#f0f0f0, #b5b5b5);
`

const DocTab = styled.button`
  display: flex;
  align-items: center;
  gap: 9px;
  height: 23px;
  padding: 0 ${pr => (pr.$active ? 11 : 12)}px 2px 11px;
  border: 1px solid #444;
  border-top: 0;
  border-radius: 0 0 6px 6px;
  background: ${pr => (pr.$active ? '#fff' : '#c9c9c9')};
  color: #1a1a1a;
  white-space: nowrap;
`

/* ---------- status bar and taskbar ---------- */

const StatusBar = styled.footer`
  display: flex;
  align-items: center;
  justify-content: space-between;
  flex: none;
  height: 30px;
  padding-top: 4px;
  background: linear-gradient(#fff, #ddd 50%, #b0b0b0);
  color: #111;
`

const StatusCells = styled.div`
  display: flex;
`

const StatusCell = styled.span`
  width: 39px;
  padding-left: 10px;
  line-height: 26px;
  border-left: 1px solid #ccc;
`

const Taskbar = styled.div`
  position: relative;
  display: flex;
  align-items: center;
  flex: none;
  gap: 4px;
  height: 34px;
  padding-left: 72px;
  border-top: 1px solid #5f7287;
  background: linear-gradient(90deg, #16304f, #122c4c 45%, #1b3657 85%, #122a47);
  color: #fff;
`

const StartOrb = styled.button`
  position: absolute;
  left: 10px;
  top: -9px;
`

const TaskButton = styled.button`
  display: flex;
  align-items: center;
  gap: 5px;
  width: 158px;
  height: 33px;
  padding-left: ${pr => (pr.$active ? 8 : 9)}px;
  border: 1px solid ${pr => (pr.$active ? '#c3ced8' : '#8796a6')};
  border-radius: 2px;
  white-space: nowrap;
  background: ${pr => (pr.$active
    ? 'linear-gradient(165deg, #a9b5c1, #8797a8 48%, #62758a 52%, #8795a5)'
    : 'linear-gradient(165deg, #6b7c8f, #4b5f76 48%, #2c425d 52%, #364c66)')};
`

const Tray = styled.div`
  display: flex;
  align-items: center;
  gap: 11px;
  margin-left: auto;
`

const Language = styled.span`
  font-size: 13px;
  padding-bottom: 6px;
  margin-right: 8px;
`

const Clock = styled.time`
  margin: 0 16px 0 14px;
`

const ShowDesktop = styled.button`
  width: 28px;
  height: 33px;
  border: 1px solid #7a8b9d;
  background: linear-gradient(160deg, #50647b, #1d3654 50%, #122a47);
`

function SystemTaskbar() {
  return (
    <Taskbar>
      <StartOrb aria-label="Start">
        <Svg w={46}>
          <defs>
            <radialGradient id="orb" cx=".5" cy="1" r="1">
              <stop offset="0" stopColor="#35e0ff" />
              <stop offset=".4" stopColor="#1679b5" />
              <stop offset=".7" stopColor="#1c4a78" />
              <stop offset="1" stopColor="#9fb8cc" />
            </radialGradient>
          </defs>
          <circle cx="23" cy="23" r="21" fill="url(#orb)" stroke="#132b42" strokeWidth="2" />
          <path d="M14 12c4-3 7-2 9 0l-2 10c-3-2-6-2-9 0z" fill="#e8552a" />
          <path d="M25 13c3 2 6 2 11 0l-3 10c-3 1-6 1-10-1z" fill="#8cc63f" />
          <path d="M12 24c3-2 6-2 9 0l-2 9c-3-2-6-2-9 0z" fill="#3f9be8" />
          <path d="M22 24c3 2 6 2 10 1l-3 9c-3 2-6 1-9 0z" fill="#fccb2f" />
          <path d="M5 17C8 4 38 4 41 17c-9-5-27-5-36 0z" fill="#fff" opacity=".3" />
        </Svg>
      </StartOrb>
      <TaskButton>
        <Svg w={18}>
          <circle cx="9" cy="9" r="8.5" fill="#fcc934" />
          <path d="M2 4a8.5 8.5 0 0 1 14.5 1H9L5 10z" fill="#ea4335" />
          <path d="M2 4l5 9 2 4.5A8.5 8.5 0 0 1 2 4z" fill="#34a853" />
          <circle cx="9" cy="9" r="4" fill="#4285f4" stroke="#fff" strokeWidth="1.5" />
        </Svg>
        Create a New T...
      </TaskButton>
      <TaskButton $active>
        <Svg w={20}>
          <rect width="20" height="20" fill="#efe3da" />
          <path d="M5 1h9v4h-2v6h2v3H5v-3h2V5H5z" fill="#cf6a1c" />
          <path d="M9 20v-4h4v4M11 16v4M15 16v4M17 16v4" stroke="#333" />
        </Svg>
        Autodesk Invent...
      </TaskButton>
      <Tray>
        <Language>EN</Language>
        <Svg w={20} h={16}><path d="M1 6v5c2 6 16 6 18 0V6z" fill="#b85a2c" /><ellipse cx="10" cy="6" rx="9" ry="4" fill="#cf9c2c" /><path d="M1 8c6 4 12 3 18-3M1 11c6 3 12 2 18-3M3 4c5 3 9 2 13-1" stroke="#4a3a20" strokeWidth="1.3" /></Svg>
        <Svg w={16} h={20}><ellipse cx="8" cy="10" rx="7" ry="10" fill="#0b2f66" /><path d="M4 6l8 7-4 4V3l4 4-8 7" stroke="#fff" strokeWidth="1.5" /></Svg>
        <Svg w={20}><rect width="20" height="20" rx="2" fill="#cb0f3c" /><path d="M5 18C0 12 8 6 15 2c2 7 2 14-4 15-3 0-4-4 3-11" stroke="#fff" strokeWidth="1.6" /></Svg>
        <Svg w={20}><rect width="20" height="20" fill="#5fa83a" stroke="#8fd060" /><path d="M4 5h12v5c0 4-3 5-6 7-3-2-6-3-6-7z" fill="#fff" /><path d="M10 4v13M4 10h12" stroke="#5fa83a" strokeWidth="1.5" /></Svg>
        <Svg w={18} h={20}><path d="M4 3h3V1h4v2h3v16H4z" fill="#14202e" stroke="#fff" strokeWidth="1.4" /><path d="M6 7h6v10H6z" fill="#fff" /></Svg>
        <Svg w={20}><path d="M3 16v-3M7 16v-5M10 16V9M13 16V6" stroke="#fff" strokeWidth="2" /><path d="M17 16V4" stroke="#8795a5" strokeWidth="2" /></Svg>
        <Svg w={20}><path d="M1 6h3l5-5v17l-5-5H1z" fill="#eee" /><circle cx="13" cy="14" r="5" fill="#fff" stroke="#d81e1e" strokeWidth="2" /><path d="M10 11l6 6" stroke="#d81e1e" strokeWidth="2" /></Svg>
        <Clock>8:06 AM</Clock>
      </Tray>
      <ShowDesktop aria-label="Show desktop" />
    </Taskbar>
  )
}

export default function App() {
  return (
    <Page>
      <GlobalStyle />
      <Header />
      <Ribbon />
      <Workspace>
        <ModelBrowser />
        <Stage>
          <Viewport>
            <HookModel />
            <DocControls>
              <button aria-label="Minimize document"><Svg w={13}><path d="M1 6h11v3H1z" fill="#eee" /></Svg></button>
              <button aria-label="Restore document"><Svg w={12} h={13}><path d="M4 2h7v7M2 5h6v6H2z" stroke="#eee" strokeWidth="1.8" /></Svg></button>
              <button aria-label="Close document"><Svg w={12} h={13}><path d="M2 2l8 8M10 2l-8 8" stroke="#eee" strokeWidth="3" /></Svg></button>
            </DocControls>
            <CubeSpot><ViewCube /></CubeSpot>
            <NavigationBar />
            <TriadSpot><Triad /></TriadSpot>
          </Viewport>
          <DocTabs>
            <ArrangeButton aria-label="Cascade"><Svg w={20}><path d="M1 2h13v9H1zM4 6h13v9H4zM7 10h12v9H7z" fill="#ddd" stroke="#444" strokeWidth="1.5" /></Svg></ArrangeButton>
            <ArrangeButton aria-label="Tile"><Svg w={20}><path d="M1 2h7v6H1zM11 2h7v6h-7zM1 11h7v6H1zM11 11h7v6h-7z" fill="#eee" stroke="#444" strokeWidth="1.5" /></Svg></ArrangeButton>
            <ArrangeButton aria-label="Show tabs"><Svg w={12} h={14}><path d="M0 7l6-6 6 6z" fill="#333" /></Svg></ArrangeButton>
            <DocTab>My Home</DocTab>
            <DocTab $active>
              Thresh Hook Key...ipt
              <Svg w={11} h={15}><path d="M1 1h9M1 9h9M2 2l7 7M9 2L2 9M1 1v2M10 1v2M1 7v2M10 7v2" stroke="#777" strokeWidth="1.4" /></Svg>
            </DocTab>
          </DocTabs>
        </Stage>
      </Workspace>
      <StatusBar>
        <span>Ready</span>
        <StatusCells>
          <StatusCell>1</StatusCell>
          <StatusCell>1</StatusCell>
        </StatusCells>
      </StatusBar>
      <SystemTaskbar />
    </Page>
  )
}
